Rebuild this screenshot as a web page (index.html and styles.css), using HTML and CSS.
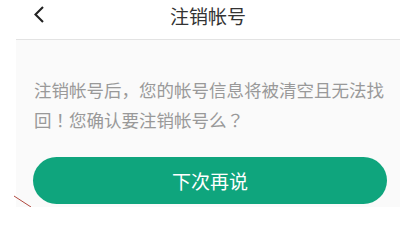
FILE: index.html
```html
<!DOCTYPE html>
<html lang="zh">
<head>
<meta charset="utf-8">
<link rel="stylesheet" href="styles.css">
</head>
<body>
<div class="page">
  <header class="topbar">
    <span class="back">
      <svg width="13" height="17" viewBox="0 0 13 17"><path d="M11 1 L3.5 8.5 L11 16" fill="none" stroke="#222" stroke-width="2.1"/></svg>
    </span>
    <h1 class="title">注销帐号</h1>
  </header>
  <main class="content">
    <p class="notice">注销帐号后<span class="punct" lang="ja">，</span>您的帐号信息将被清空且无法找回<span class="punct" lang="ja">！</span>您确认要注销帐号么<span class="punct" lang="ja">？</span></p>
    <button class="btn">下次再说</button>
  </main>
</div>
<svg class="mark" width="20" height="12" viewBox="0 0 20 12"><path d="M1 1 L18 12" stroke="#b0493f" stroke-width="1"/></svg>
</body>
</html>
```
FILE: styles.css
```css
html, body {
  margin: 0;
  padding: 0;
  background: #ffffff;
  font-family: "Noto Sans CJK SC", "Noto Sans", sans-serif;
}
body {
  width: 400px;
  height: 207px;
  overflow: hidden;
  position: relative;
}
.page {
  margin-left: 16px;
  background: #fafafa;
  height: 207px;
}
.topbar {
  height: 39px;
  background: #ffffff;
  border-bottom: 1px solid #e3e3e3;
  display: flex;
  justify-content: center;
  position: relative;
}
.back {
  position: absolute;
  left: 16px;
  top: 6px;
  display: flex;
}
.title {
  margin: 0;
  font-size: 19px;
  font-weight: 400;
  line-height: 31px;
  color: #333333;
}
.content {
  padding: 35px 14px 0 18px;
}
.notice {
  margin: 0;
  font-size: 17.5px;
  line-height: 30px;
  color: #999999;
}
.punct {
  font-family: "Noto Sans CJK JP", "Noto Sans CJK SC", sans-serif;
}
.btn {
  display: block;
  margin: 22px 0 0 -1px;
  width: 354px;
  height: 47px;
  border: none;
  border-radius: 24px;
  background: #0fa57d;
  color: #ffffff;
  font-family: inherit;
  font-size: 19px;
  letter-spacing: 0;
}
.mark {
  position: absolute;
  left: 13px;
  top: 195px;
}
```
